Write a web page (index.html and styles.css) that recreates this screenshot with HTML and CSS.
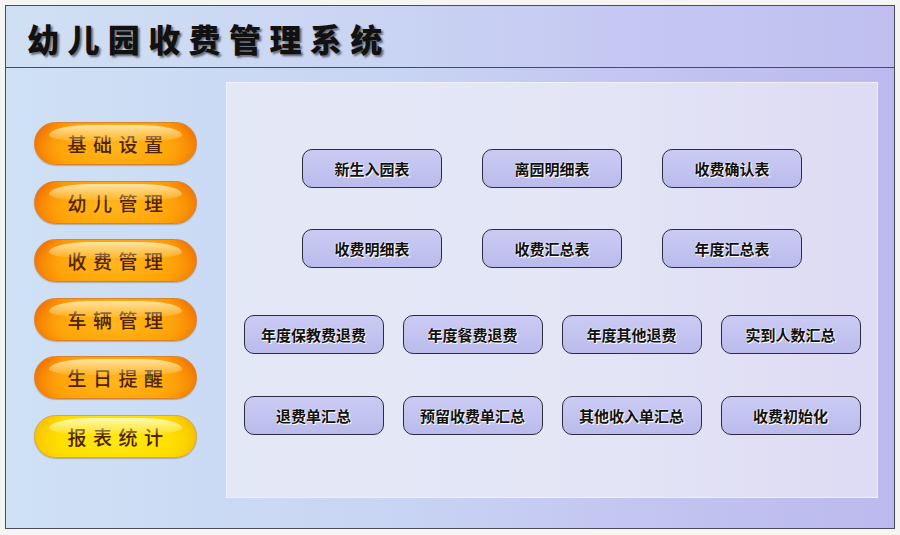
FILE: index.html
```html
<!DOCTYPE html>
<html lang="zh-CN">
<head>
<meta charset="utf-8">
<title>幼儿园收费管理系统</title>
<link rel="stylesheet" href="styles.css">
</head>
<body>
<div class="frame">
  <header class="header">
    <h1 class="title">幼儿园收费管理系统</h1>
  </header>
  <div class="main">
    <nav class="sidebar">
      <div class="pill">基础设置</div>
      <div class="pill">幼儿管理</div>
      <div class="pill">收费管理</div>
      <div class="pill">车辆管理</div>
      <div class="pill">生日提醒</div>
      <div class="pill pill-yellow">报表统计</div>
    </nav>
    <section class="panel">
      <div class="row row-a row-1">
        <div class="btn">新生入园表</div>
        <div class="btn">离园明细表</div>
        <div class="btn">收费确认表</div>
      </div>
      <div class="row row-a row-2">
        <div class="btn">收费明细表</div>
        <div class="btn">收费汇总表</div>
        <div class="btn">年度汇总表</div>
      </div>
      <div class="row row-b row-3">
        <div class="btn">年度保教费退费</div>
        <div class="btn">年度餐费退费</div>
        <div class="btn">年度其他退费</div>
        <div class="btn">实到人数汇总</div>
      </div>
      <div class="row row-b row-4">
        <div class="btn">退费单汇总</div>
        <div class="btn">预留收费单汇总</div>
        <div class="btn">其他收入单汇总</div>
        <div class="btn">收费初始化</div>
      </div>
    </section>
  </div>
</div>
</body>
</html>
```

FILE: styles.css
```css
html, body {
  margin: 0;
  padding: 0;
  background: #f5f5f3;
  width: 900px;
  height: 535px;
  overflow: hidden;
  font-family: "Noto Sans CJK SC", "Noto Sans", sans-serif;
}

.frame {
  position: relative;
  margin: 5px 0 0 5px;
  width: 888px;
  height: 522px;
  border: 1px solid #4a4a5e;
  display: flex;
  flex-direction: column;
  background: linear-gradient(90deg, #cfe1f5 0%, #c8d4f3 45%, #c2c3f1 75%, #bcb9ee 100%);
}

.header {
  height: 62px;
  border-bottom: 1px solid #4a4a5e;
  display: flex;
  align-items: center;
  box-sizing: border-box;
  padding-left: 21px;
  background: linear-gradient(90deg, #d0e0f4 0%, #c9d3f3 45%, #c5c8f2 70%, #c0bff0 100%);
}

.title {
  margin: 0;
  font-size: 32px;
  font-weight: 900;
  letter-spacing: 8.4px;
  color: #111;
  text-shadow: 2px 2px 2px rgba(0, 0, 0, 0.5);
  line-height: 1;
  margin-top: 2px;
}

.main {
  flex: 1;
  display: flex;
}

.sidebar {
  width: 220px;
  flex: none;
  display: flex;
  flex-direction: column;
  padding-top: 54px;
  padding-left: 28px;
  box-sizing: border-box;
  gap: 15.5px;
}

.pill {
  position: relative;
  width: 163px;
  height: 43px;
  box-sizing: border-box;
  border-radius: 22px;
  border: 1px solid #d9822e;
  background:
    radial-gradient(ellipse 60% 80% at 50% 60%, #ffb81e 0%, #ffa80c 50%, rgba(255,150,0,0) 100%),
    linear-gradient(90deg, #ee6200 0%, #ff9400 18%, #ffa60a 50%, #ff9400 82%, #ec6800 100%);
  box-shadow: 0 1px 1px rgba(120, 80, 40, 0.35);
  display: flex;
  align-items: center;
  justify-content: center;
  font-size: 19px;
  font-weight: 500;
  letter-spacing: 6.5px;
  padding-left: 6px;
  color: #4e2206;
  overflow: hidden;
}

.pill::before {
  content: "";
  position: absolute;
  left: 14px;
  right: 14px;
  top: 2px;
  height: 16px;
  border-radius: 50% 50% 40% 40% / 100% 100% 60% 60%;
  background: linear-gradient(180deg, rgba(255, 240, 190, 0.85) 0%, rgba(255, 220, 120, 0.2) 100%);
}

.pill-yellow {
  border-color: #d9a82e;
  background:
    radial-gradient(ellipse 60% 80% at 50% 60%, #ffe81a 0%, #ffe000 50%, rgba(255,220,0,0) 100%),
    linear-gradient(90deg, #f4b800 0%, #ffd800 18%, #ffe600 50%, #ffd800 82%, #f2b400 100%);
}

.pill-yellow::before {
  background: linear-gradient(180deg, rgba(255, 252, 200, 0.9) 0%, rgba(255, 245, 140, 0.2) 100%);
}

.panel {
  margin: 14px 16px 30px 0;
  flex: 1;
  box-sizing: border-box;
  border-top: 1px solid #f2f2fb;
  border-left: 1px solid #eef0fb;
  border-right: 1px solid #f0f0fa;
  border-bottom: 1px solid #f0f0fa;
  background: linear-gradient(90deg, #e3e8f7 0%, #e4e6f6 50%, #dedbf4 100%);
  display: flex;
  flex-direction: column;
  padding-top: 66px;
}

.row {
  display: flex;
  justify-content: center;
}

.row-a { gap: 40px; }
.row-b { gap: 19px; }

.row-2 { margin-top: 41px; }
.row-3 { margin-top: 47px; }
.row-4 { margin-top: 42px; }

.btn {
  width: 140px;
  height: 39px;
  box-sizing: border-box;
  border: 1.5px solid #2c2c3c;
  border-radius: 10px;
  background: linear-gradient(180deg, #cacaf4 0%, #c2c2f0 60%, #babaec 100%);
  display: flex;
  align-items: center;
  justify-content: center;
  font-size: 15px;
  font-weight: 700;
  color: #111;
  text-shadow: 0 0 2px #fff, 1px 1px 0 #fff;
}
```
